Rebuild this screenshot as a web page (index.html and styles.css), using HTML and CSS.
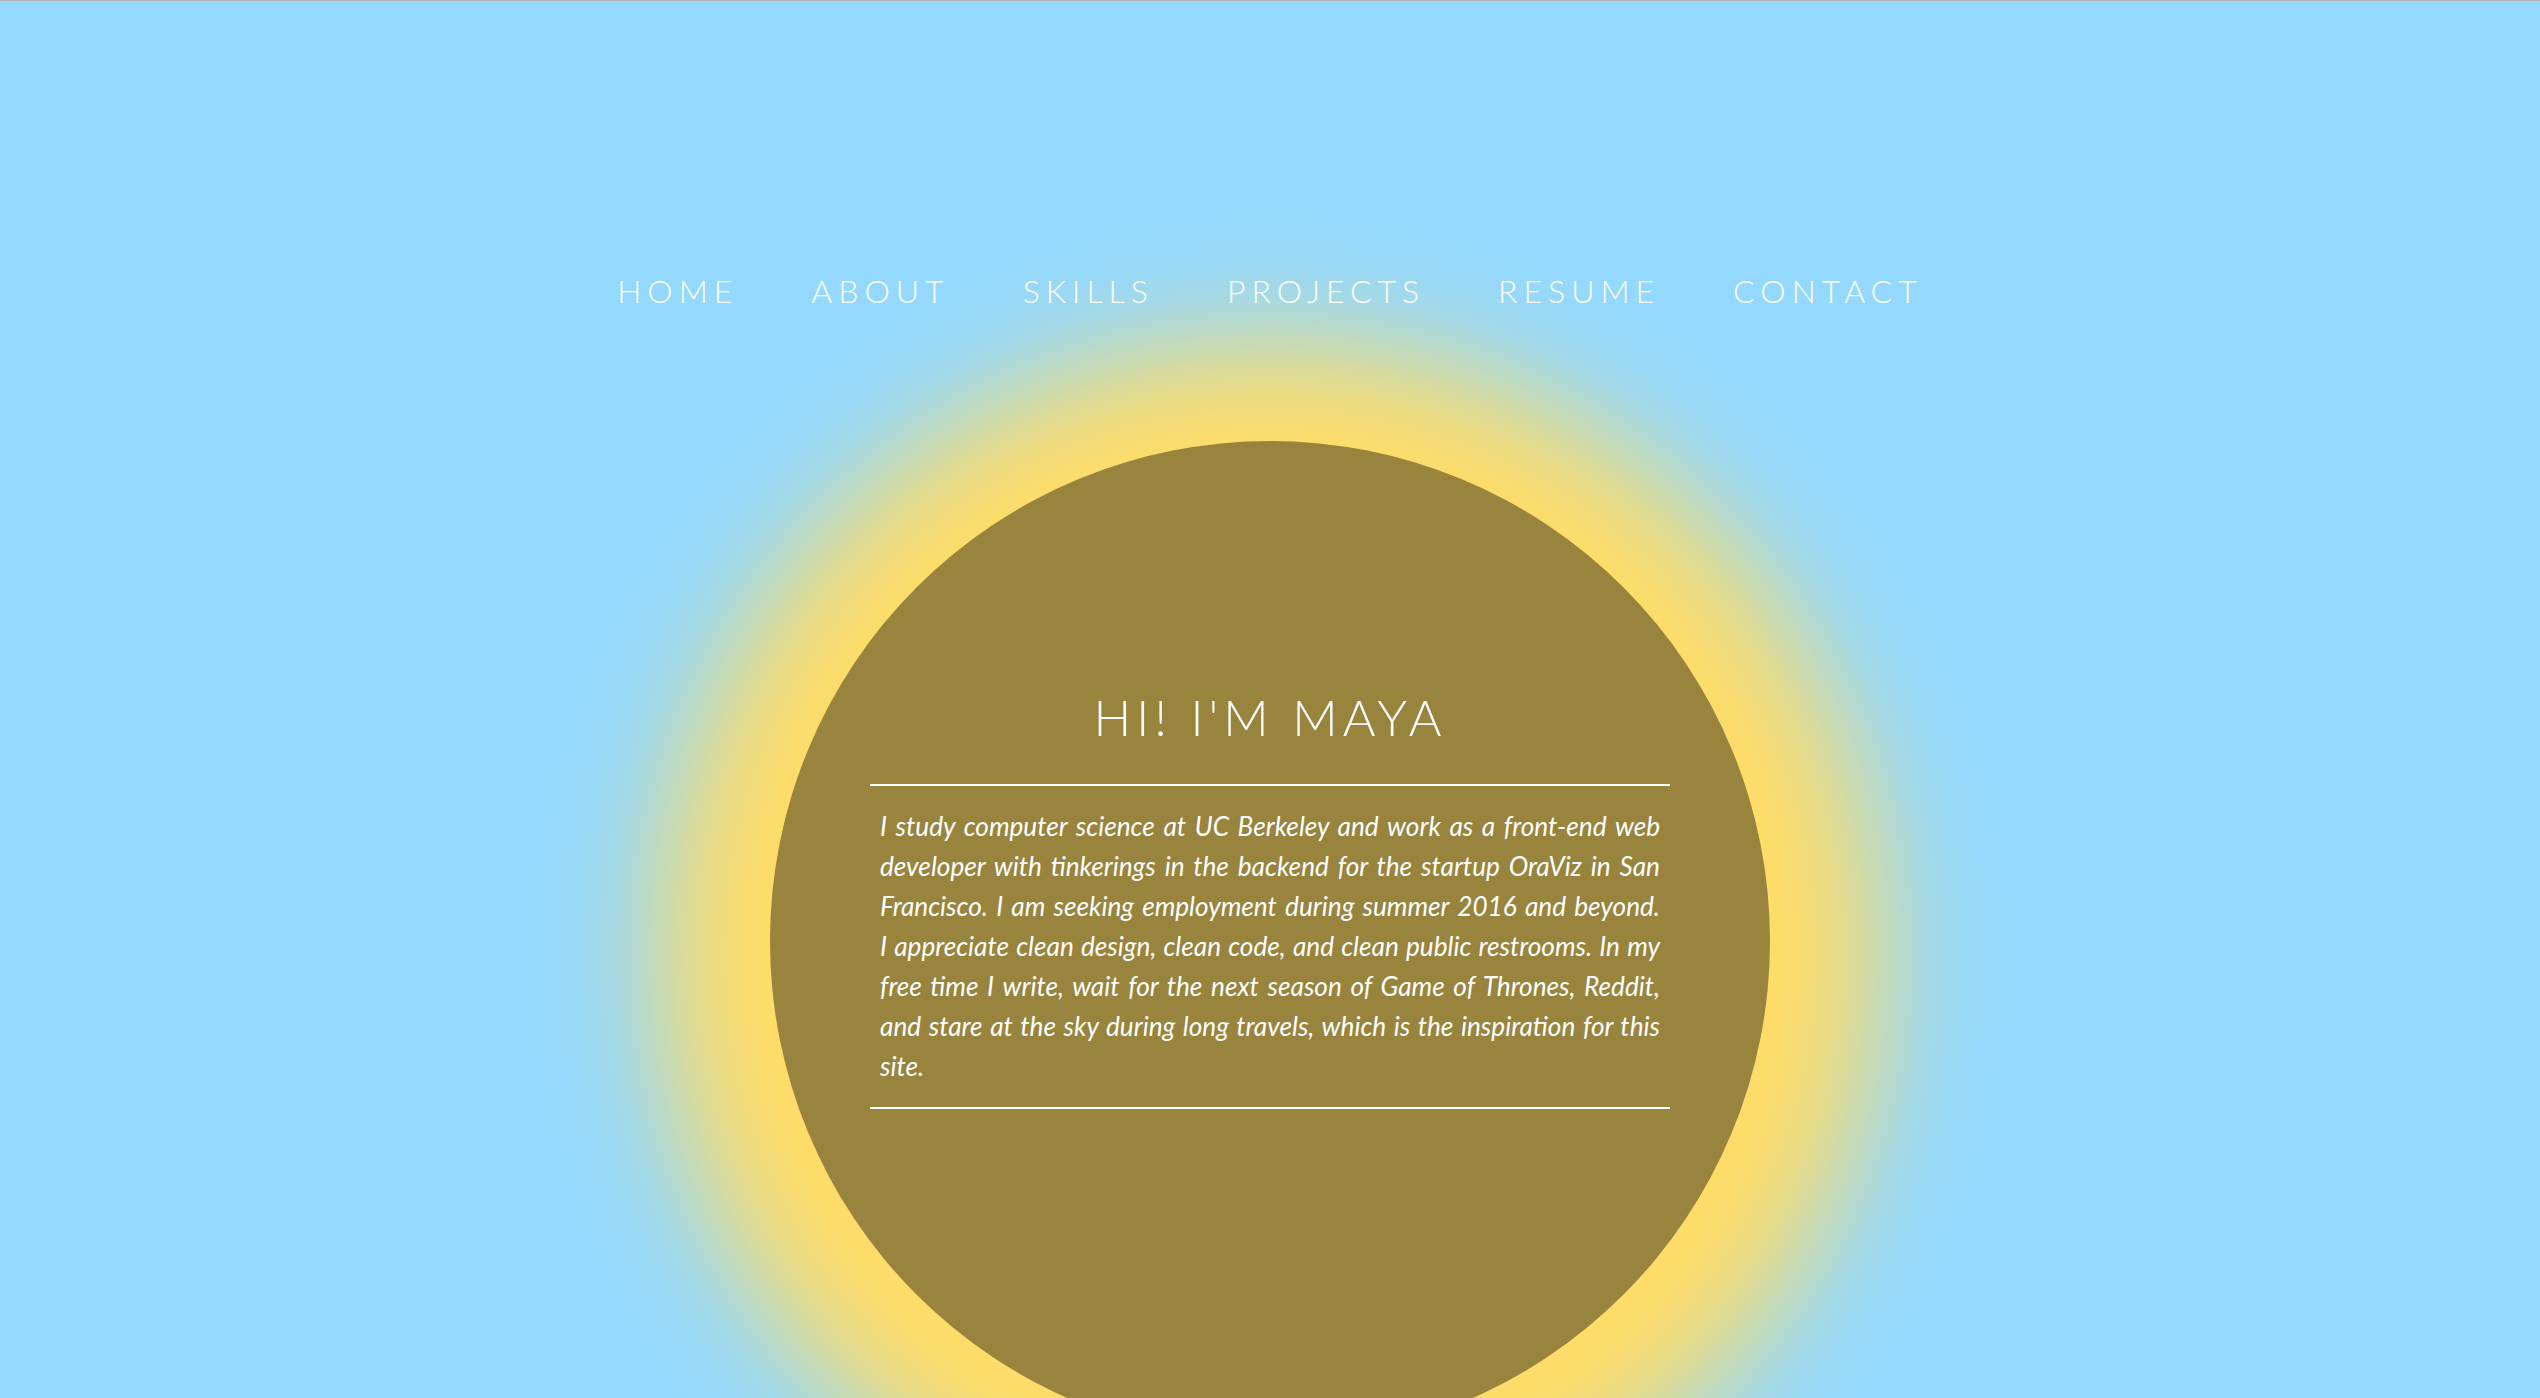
FILE: index.html
```html
<!DOCTYPE html>
<html lang="en">
<head>
<meta charset="utf-8">
<title>Maya</title>
<link rel="stylesheet" href="styles.css">
</head>
<body>
  <nav class="nav">
    <ul class="nav-list">
      <li><a href="#">HOME</a></li>
      <li><a href="#">ABOUT</a></li>
      <li><a href="#">SKILLS</a></li>
      <li><a href="#">PROJECTS</a></li>
      <li><a href="#">RESUME</a></li>
      <li><a href="#">CONTACT</a></li>
    </ul>
  </nav>
  <main class="hero">
    <section class="sun">
      <h1 class="sun-title">HI! I'M MAYA</h1>
      <div class="sun-body">
        <p>I study computer science at UC Berkeley and work as a front-end web developer with tinkerings in the backend for the startup OraViz in San Francisco. I am seeking employment during summer 2016 and beyond. I&nbsp;appreciate clean design, clean code, and clean public restrooms. In my free time I write, wait for the next season of Game of Thrones, Reddit, and stare at the sky during long travels, which is the inspiration for this site.</p>
      </div>
    </section>
  </main>
</body>
</html>
```
FILE: styles.css
```css
html {
  background: #94d9fd;
}
body {
  margin: 0;
  min-height: 1397px;
  border-top: 1px solid #b4b4b4;
  background: radial-gradient(circle at 50% 953px,
    #fddc6a 0, #fddc6a 508px, #f9dc70 526px, #ecdb82 558px, #dbdb99 585px,
    #c8dab4 610px, #b6d9ce 635px, #a4d9e7 662px, #99d8f6 697px, #94d9fd 740px);
  font-family: Lato, "Open Sans", sans-serif;
  color: #fff;
  overflow: hidden;
}
.nav {
  padding-top: 274px;
}
.nav-list {
  list-style: none;
  margin: 0;
  padding: 0;
  display: flex;
  justify-content: center;
  gap: 73px;
}
.nav-list a {
  display: block;
  color: #fff;
  text-decoration: none;
  font-weight: 300;
  font-size: 32px;
  line-height: 32px;
  letter-spacing: 6px;
}
.hero {
  display: flex;
  justify-content: center;
  padding-top: 134px;
}
.sun {
  width: 1000px;
  height: 1000px;
  flex: none;
  border-radius: 50%;
  background: #99843e;
  display: flex;
  flex-direction: column;
  align-items: center;
  padding-top: 251px;
  box-sizing: border-box;
}
.sun-title {
  margin: 0;
  font-weight: 300;
  font-size: 50px;
  line-height: 50px;
  letter-spacing: 5px;
}
.sun-body {
  width: 800px;
  margin-top: 42px;
  border-top: 2px solid #fff;
  border-bottom: 2px solid #fff;
  padding: 20px 10px 21px;
  box-sizing: border-box;
}
.sun-body p {
  margin: 0;
  font-style: italic;
  font-size: 26.2px;
  line-height: 40px;
  text-align: justify;
}
```
